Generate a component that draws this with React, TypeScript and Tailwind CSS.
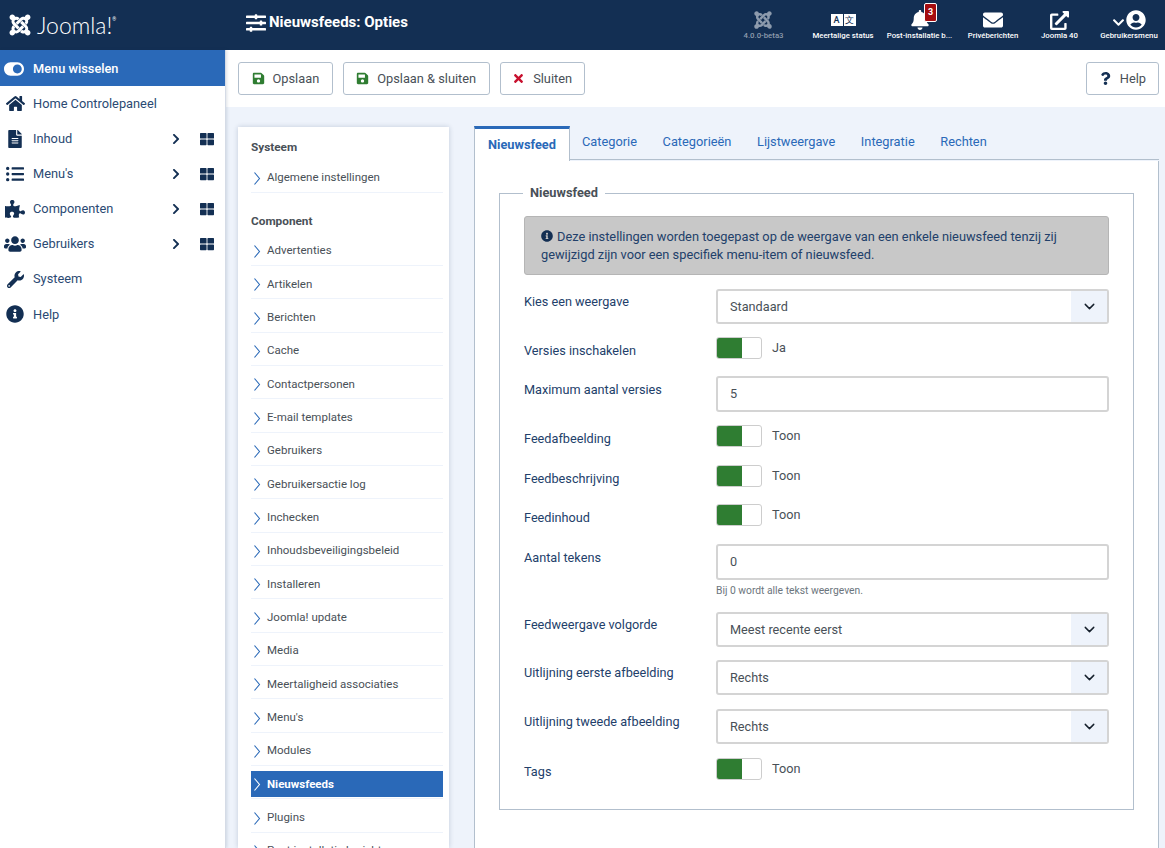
import { ReactNode } from "react";
import {
  FaBell,
  FaChevronDown,
  FaChevronRight,
  FaEnvelope,
  FaExternalLinkAlt,
  FaFileAlt,
  FaHome,
  FaInfoCircle,
  FaJoomla,
  FaListUl,
  FaPuzzlePiece,
  FaQuestion,
  FaSave,
  FaSlidersH,
  FaThLarge,
  FaTimes,
  FaToggleOn,
  FaUserCircle,
  FaUsers,
  FaWrench,
} from "react-icons/fa";
import { LuChevronDown } from "react-icons/lu";

const font = { fontFamily: "Roboto, 'Noto Sans', sans-serif" };

const menu = [
  { label: "Home Controlepaneel", icon: <FaHome className="text-[19px]" /> },
  { label: "Inhoud", icon: <FaFileAlt className="text-[18px]" />, more: true },
  { label: "Menu's", icon: <FaListUl className="text-[18px]" />, more: true },
  { label: "Componenten", icon: <FaPuzzlePiece className="text-[20px]" />, more: true },
  { label: "Gebruikers", icon: <FaUsers className="text-[22px]" />, more: true },
  { label: "Systeem", icon: <FaWrench className="text-[17px]" /> },
  { label: "Help", icon: <FaInfoCircle className="text-[18px]" /> },
];

const components = [
  "Advertenties",
  "Artikelen",
  "Berichten",
  "Cache",
  "Contactpersonen",
  "E-mail templates",
  "Gebruikers",
  "Gebruikersactie log",
  "Inchecken",
  "Inhoudsbeveiligingsbeleid",
  "Installeren",
  "Joomla! update",
  "Media",
  "Meertaligheid associaties",
  "Menu's",
  "Modules",
  "Nieuwsfeeds",
  "Plugins",
  "Post-installatie berichten",
];

const tabs = ["Categorie", "Categorieën", "Lijstweergave", "Integratie", "Rechten"];

function HeaderItem({ icon, label, dim }: { icon: ReactNode; label: string; dim?: boolean }) {
  return (
    <div className={`flex flex-col items-center ${dim ? "text-[#8d9bad]" : "text-white"}`}>
      <div className="flex h-[24px] items-center">{icon}</div>
      <span className="mt-[-2px] whitespace-nowrap text-[7.8px] leading-[12px] font-medium">{label}</span>
    </div>
  );
}

function ToolButton({ icon, label, className = "" }: { icon: ReactNode; label: string; className?: string }) {
  return (
    <button className={`flex h-[33px] items-center gap-[8px] rounded-[3px] border border-[#b2bfcd] bg-white text-[12.8px] text-[#495057] ${className}`}>
      {icon}
      {label}
    </button>
  );
}

function NavLink({ label, active }: { label: string; active?: boolean }) {
  return (
    <div className={`flex h-[26px] items-center text-[11.5px] ${active ? "bg-[#2a69b8] font-bold text-white" : "text-[#495057]"}`}>
      <svg width="8" height="15" viewBox="0 0 8 15" className={`ml-[2px] mr-[6px] mt-[1px] shrink-0 ${active ? "text-white" : "text-[#2a69b8]"}`}>
        <path d="M1.5 1.5 L6.5 7.5 L1.5 13.5" fill="none" stroke="currentColor" strokeWidth="1.1" />
      </svg>
      <span className="whitespace-nowrap">{label}</span>
    </div>
  );
}

function Label({ children, className = "" }: { children: ReactNode; className?: string }) {
  return <div className={`w-[192px] shrink-0 text-[12.7px] leading-[18px] text-[#22406a] ${className}`}>{children}</div>;
}

function SelectRow({ label, value, className = "" }: { label: string; value: string; className?: string }) {
  return (
    <div className={`flex ${className}`}>
      <Label className="pt-[4px]">{label}</Label>
      <div className="flex h-[35px] flex-1 items-center justify-between rounded-[3px] border-2 border-[#d4d4d4] pl-[12px] text-[12.7px] text-[#495057]">
        {value}
        <span className="flex h-full w-[36px] items-center justify-center bg-[#eef3fb] text-[#16202c]">
          <LuChevronDown className="text-[17px]" />
        </span>
      </div>
    </div>
  );
}

function InputRow({ label, value, hint, className = "" }: { label: string; value: string; hint?: string; className?: string }) {
  return (
    <div className={`flex ${className}`}>
      <Label className="pt-[5px]">{label}</Label>
      <div className="flex-1">
        <div className="flex h-[36px] items-center rounded-[3px] border-2 border-[#d4d4d4] pl-[12px] text-[12.7px] text-[#495057]">{value}</div>
        {hint && <div className="mt-[5px] text-[10.3px] leading-[12px] text-[#6c757d]">{hint}</div>}
      </div>
    </div>
  );
}

function ToggleRow({ label, value, className = "" }: { label: string; value: string; className?: string }) {
  return (
    <div className={`flex h-[22px] ${className}`}>
      <Label className="pt-[5px]">{label}</Label>
      <div className="flex items-start">
        <div className="flex h-[22px] w-[46px] overflow-hidden rounded-[3px] border border-[#cdcdcd] bg-white">
          <div className="w-[25px] bg-[#2f7d32]" />
        </div>
        <span className="ml-[10px] pt-[2px] text-[12.7px] leading-[18px] text-[#495057]">{value}</span>
      </div>
    </div>
  );
}

export default function App() {
  return (
    <div className="flex h-[848px] w-[1165px] flex-col overflow-hidden bg-[#eef3fb]" style={font}>
      <header className="flex h-[50px] shrink-0 items-center bg-[#132f53] text-white">
        <div className="flex w-[246px] shrink-0 items-center pl-[8px]">
          <FaJoomla className="text-[24px]" />
          <span className="ml-[5px] text-[23px] leading-none font-light" style={{ fontFamily: "Lato, sans-serif" }}>
            Joomla!
          </span>
          <span className="mb-[12px] text-[5px] leading-none">®</span>
        </div>
        <FaSlidersH className="mb-[5px] text-[20px]" />
        <h1 className="mb-[6px] ml-[3px] text-[15px] font-bold">Nieuwsfeeds: Opties</h1>
        <div className="ml-auto flex items-center">
          <div className="flex w-[45px] justify-center"><HeaderItem dim label="4.0.0-beta3" icon={<FaJoomla className="text-[20px]" />} /></div>
          <div className="ml-[27px] flex w-[60px] justify-center">
            <HeaderItem
              label="Meertalige status"
              icon={
                <span className="flex h-[12px] w-[25px] text-[9px] leading-[12px] font-medium text-[#132f53]">
                  <span className="w-[12px] bg-white text-center">A</span>
                  <span className="ml-px w-[12px] bg-white text-center">文</span>
                </span>
              }
            />
          </div>
          <div className="relative ml-[15px] flex w-[63px] justify-center">
            <HeaderItem label="Post-installatie b..." icon={<FaBell className="text-[20px]" />} />
            <span className="absolute left-[36px] top-[-5px] rounded-[2px] border border-white bg-[#a50d10] px-[3px] text-[9px] leading-[17px] font-bold">3</span>
          </div>
          <div className="ml-[17px] flex w-[50px] justify-center"><HeaderItem label="Privéberichten" icon={<FaEnvelope className="text-[20px]" />} /></div>
          <div className="ml-[23px] flex w-[37px] justify-center"><HeaderItem label="Joomla 40" icon={<FaExternalLinkAlt className="text-[19px]" />} /></div>
          <div className="ml-[23px] mr-[8px] flex w-[56px] justify-center">
            <HeaderItem
              label="Gebruikersmenu"
              icon={
                <span className="flex items-center gap-[1px]">
                  <FaChevronDown className="mt-[5px] text-[13px]" />
                  <FaUserCircle className="text-[20px]" />
                </span>
              }
            />
          </div>
        </div>
      </header>

      <div className="flex min-h-0 flex-1">
        <aside className="z-10 w-[226px] shrink-0 border-r border-[#d5dbe6] bg-white text-[12.8px] text-[#2b4a73] shadow-[1px_0_3px_rgba(19,47,83,0.15)]">
          <div className="flex h-[36px] items-center bg-[#2a69b8] pl-[4px] pt-[1px] font-medium text-white">
            <FaToggleOn className="mr-[9px] w-[20px] text-[20px]" />
            Menu wisselen
          </div>
          {menu.map((item) => (
            <div key={item.label} className="flex h-[35.1px] items-center pl-[3px]">
              <span className="flex w-[24px] justify-center text-[#132f53]">{item.icon}</span>
              <span className="ml-[6px]">{item.label}</span>
              {item.more && (
                <span className="ml-auto mr-[11px] flex items-center gap-[18px] text-[#132f53]">
                  <FaChevronRight className="text-[12px]" />
                  <FaThLarge className="text-[14px]" />
                </span>
              )}
            </div>
          ))}
        </aside>

        <main className="flex min-w-0 flex-1 flex-col">
          <div className="flex h-[57px] shrink-0 items-center gap-[10px] bg-white pl-[12px] pr-[6px]">
            <ToolButton className="px-[12.5px]" icon={<FaSave className="text-[13px] text-[#2f7d32]" />} label="Opslaan" />
            <ToolButton className="px-[12.5px]" icon={<FaSave className="text-[13px] text-[#2f7d32]" />} label="Opslaan & sluiten" />
            <ToolButton className="px-[11.5px]" icon={<FaTimes className="text-[13px] text-[#c8102e]" />} label="Sluiten" />
            <ToolButton className="ml-auto px-[12px]" icon={<FaQuestion className="text-[13px] text-[#132f53]" />} label="Help" />
          </div>

          <div className="flex min-h-0 flex-1 pl-[12px] pr-[6px] pt-[19px]">
            <nav className="mt-[1px] w-[211px] shrink-0 bg-white pl-[13px] pr-[6px] pt-[10px] shadow-[0_0_5px_rgba(19,47,83,0.2)]">
              <h3 className="text-[11.8px] leading-[20px] font-bold text-[#495057]">Systeem</h3>
              <div className="mt-[8px] border-b border-[#eef3fb] pb-[1px]">
                <NavLink label="Algemene instellingen" />
              </div>
              <h3 className="mt-[18px] text-[11.8px] leading-[20px] font-bold text-[#495057]">Component</h3>
              <div className="mt-[7px]">
                {components.map((c) => (
                  <div key={c} className="mb-[5.33px] border-b border-[#eef3fb] pb-px last:border-0">
                    <NavLink label={c} active={c === "Nieuwsfeeds"} />
                  </div>
                ))}
              </div>
            </nav>

            <section className="ml-[25px] flex min-w-0 flex-1 flex-col">
              <div className="flex h-[35px] shrink-0 text-[12.8px] text-[#2a69b8]">
                <div className="z-10 flex h-[35px] w-[96px] items-center justify-center border-x border-t-[3px] border-x-[#b2bfcd] border-t-[#2a69b8] bg-white font-bold">
                  Nieuwsfeed
                </div>
                <div className="flex h-[34px] flex-1 items-center gap-[25.6px] border-b border-[#b2bfcd] pb-[1px] pl-[12px]">
                  {tabs.map((t) => (
                    <span key={t}>{t}</span>
                  ))}
                </div>
              </div>
              <div className="min-h-0 flex-1 border-x border-[#b2bfcd] bg-white px-[24px] pt-[25px]">
                <fieldset className="h-[624px] border border-[#b2bfcd] px-[24px]">
                  <legend className="ml-[-1px] px-[7px] text-[12.8px] leading-[14px] font-bold text-[#495057]">Nieuwsfeed</legend>
                  <div className="mt-[16px] mb-[14px] h-[59px] rounded-[3px] border border-[#b5b5b5] bg-[#c8c8c8] px-[16px] pt-[11px] text-[12.8px] leading-[18px] text-[#22406a]">
                    <FaInfoCircle className="mr-[4px] inline align-[-1px] text-[12px] text-[#132f53]" />
                    Deze instellingen worden toegepast op de weergave van een enkele nieuwsfeed tenzij zij gewijzigd zijn voor een specifiek menu-item of nieuwsfeed.
                  </div>
                  <SelectRow label="Kies een weergave" value="Standaard" className="mb-[13px]" />
                  <ToggleRow label="Versies inschakelen" value="Ja" className="mb-[17px]" />
                  <InputRow label="Maximum aantal versies" value="5" className="mb-[13px]" />
                  <ToggleRow label="Feedafbeelding" value="Toon" className="mb-[18px]" />
                  <ToggleRow label="Feedbeschrijving" value="Toon" className="mb-[17px]" />
                  <ToggleRow label="Feedinhoud" value="Toon" className="mb-[18px]" />
                  <InputRow label="Aantal tekens" value="0" hint="Bij 0 wordt alle tekst weergeven." className="mb-[15px]" />
                  <SelectRow label="Feedweergave volgorde" value="Meest recente eerst" className="mb-[13px]" />
                  <SelectRow label="Uitlijning eerste afbeelding" value="Rechts" className="mb-[14px]" />
                  <SelectRow label="Uitlijning tweede afbeelding" value="Rechts" className="mb-[14px]" />
                  <ToggleRow label="Tags" value="Toon" />
                </fieldset>
              </div>
            </section>
          </div>
        </main>
      </div>
    </div>
  );
}
